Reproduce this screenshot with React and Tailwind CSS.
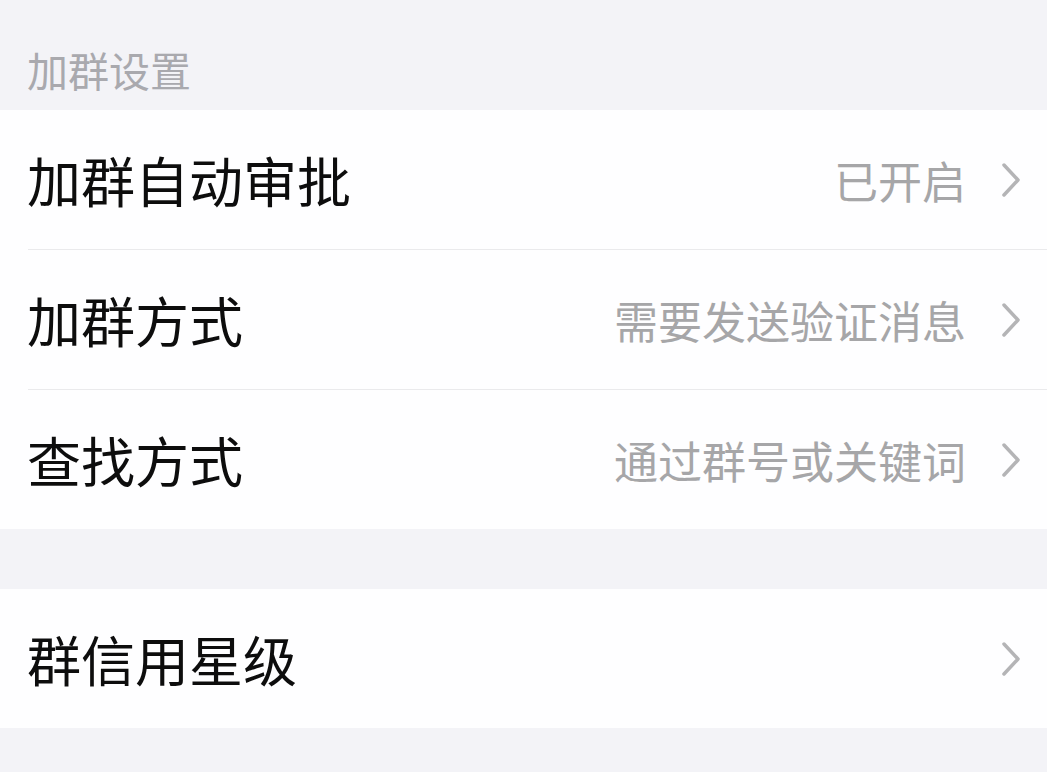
import React from 'react';

const Chevron = () => (
  <svg width="20" height="36" viewBox="0 0 20 36" fill="none" className="shrink-0">
    <polyline
      points="3,3 17,18 3,33"
      stroke="#b4b4b6"
      strokeWidth="3.5"
      strokeLinecap="round"
      strokeLinejoin="round"
    />
  </svg>
);

const Row = ({ title, value }) => (
  <div className="h-[139px] flex items-center pl-[27px] pr-[26px]">
    <span className="text-[54px] leading-none text-[#0d0d0d]">{title}</span>
    <div className="flex-1" />
    {value && <span className="text-[44px] leading-none text-[#a6a6a8] mr-[35px]">{value}</span>}
    <Chevron />
  </div>
);

const Divider = () => <div className="h-px bg-[#eaeaec] ml-[28px]" />;

const App = () => {
  return (
    <div
      className="w-[1047px] h-[772px] bg-[#f3f3f7] overflow-hidden"
      style={{ fontFamily: '"Noto Sans CJK SC", "Noto Sans", sans-serif' }}
    >
      {/* section header */}
      <div className="h-[110px] flex items-end pl-[27px] pb-[20px]">
        <span className="text-[41px] leading-none text-[#a9a9ae]">加群设置</span>
      </div>

      <div className="bg-[#fefeff]">
        <Row title="加群自动审批" value="已开启" />
        <Divider />
        <Row title="加群方式" value="需要发送验证消息" />
        <Divider />
        <Row title="查找方式" value="通过群号或关键词" />
      </div>

      <div className="h-[60px]" />

      <div className="bg-[#fefeff]">
        <Row title="群信用星级" />
      </div>
    </div>
  );
};

export default App;
